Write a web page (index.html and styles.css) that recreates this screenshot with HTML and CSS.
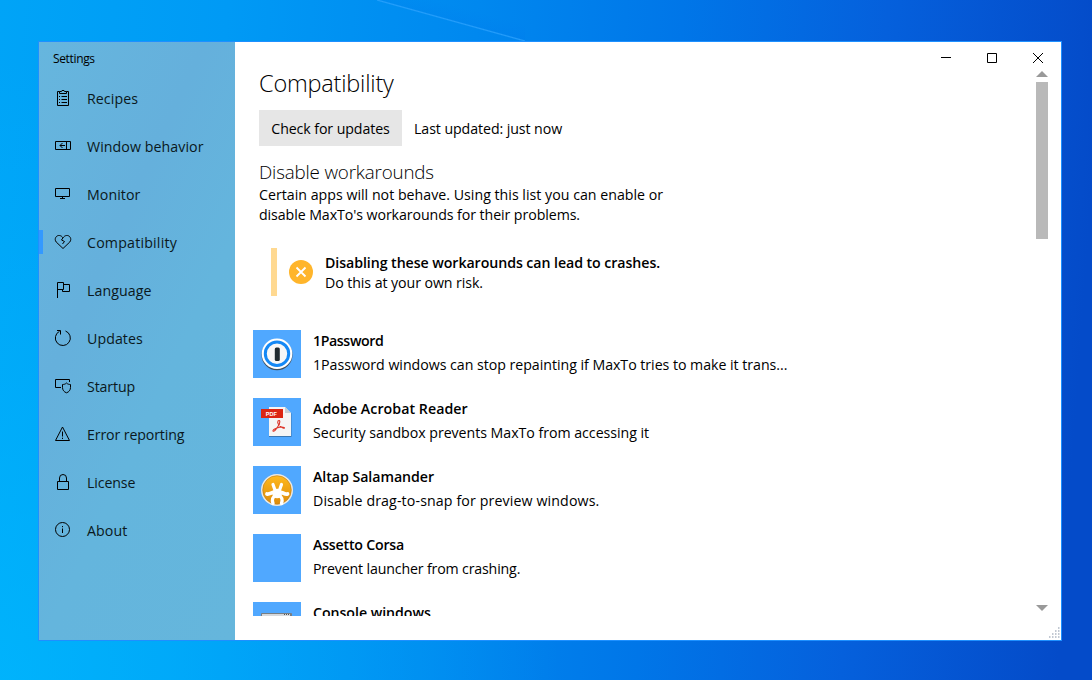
FILE: index.html
```html
<!DOCTYPE html>
<html lang="en">
<head>
<meta charset="utf-8">
<title>Settings</title>
<link rel="stylesheet" href="styles.css">
</head>
<body>
<main class="window">
  <aside class="sidebar">
    <div class="app-title">Settings</div>
    <nav class="nav">
      <a class="nav-item"><svg class="icon" viewBox="0 0 18 18"><path d="M5.500 2.500H3.500V16.500H14.500V2.500H12.500M5.500 4.500V2.500H7.500L8 1.500H10L10.500 2.500H12.500V4.500ZM5 7.500H6M7.500 7.500H13M5 10.500H6M7.500 10.500H13M5 13.500H6M7.500 13.500H13"/></svg><span>Recipes</span></a>
      <a class="nav-item"><svg class="icon" viewBox="0 0 18 18"><path d="M1.500 4.500H16.500V12.500H1.500ZM12.500 4.500V12.500M11 8.500H6M8.500 6L6 8.500L8.500 11"/></svg><span>Window behavior</span></a>
      <a class="nav-item"><svg class="icon" viewBox="0 0 18 18"><path d="M1.500 3.500H15.500V11.500H1.500ZM8.500 11.500V14M6 13.500H11"/></svg><span>Monitor</span></a>
      <a class="nav-item selected"><svg class="icon" viewBox="0 0 18 18"><path d="M9 15.500L2.200 9C-.3 5.800 2.500 2 5.500 2.500C7.200 2.700 8 3.600 9 4.800C10 3.600 10.800 2.700 12.500 2.500C15.500 2 18.300 5.800 15.800 9ZM9 4.800L7.500 7L10.500 8.500L8.500 11"/></svg><span>Compatibility</span></a>
      <a class="nav-item"><svg class="icon" viewBox="0 0 18 18"><path d="M3.500 17V1.500H9.500V8.500H3.500M9.500 3.500H15.500V10.500H8.500V8.500"/></svg><span>Language</span></a>
      <a class="nav-item"><svg class="icon" viewBox="0 0 18 18"><path d="M11.500 2A7.500 7.500 0 1 1 5.500 2.300M3 1.500H6.500V5.500"/></svg><span>Updates</span></a>
      <a class="nav-item narrow"><svg class="icon" viewBox="0 0 18 18"><path d="M7 10.500H1.500V2.500H15.500V5M12.500 6C11.300 7.200 10 7.500 8.500 7.500V10.500C8.500 13 10 15 12.500 15.800C15 15 16.500 13 16.500 10.500V7.500C15 7.500 13.700 7.200 12.500 6Z"/></svg><span>Startup</span></a>
      <a class="nav-item narrow"><svg class="icon" viewBox="0 0 18 18"><path d="M8.500 2L15.500 15.500H1.500ZM8.500 6.500V11.500M8.500 12.700V14"/></svg><span>Error reporting</span></a>
      <a class="nav-item narrow"><svg class="icon" viewBox="0 0 18 18"><path d="M3.500 8.500H14.500V16.500H3.500ZM5.500 8.500V5A3.500 3.500 0 0 1 12.500 5V8.500"/></svg><span>License</span></a>
      <a class="nav-item"><svg class="icon" viewBox="0 0 18 18"><circle cx="8.500" cy="8.500" r="7"/><path d="M8.500 7.500V12M8.500 5V6.200"/></svg><span>About</span></a>
    </nav>
  </aside>
  <section class="content">
    <div class="controls">
      <svg viewBox="0 0 10 10"><path d="M0 4.500H10"/></svg>
      <svg viewBox="0 0 10 10"><path d="M.5.500H9.500V9.500H.5Z"/></svg>
      <svg viewBox="0 0 10 10"><path d="M0 0L10 10M10 0L0 10"/></svg>
    </div>
    <div class="body">
      <div class="page">
        <h1>Compatibility</h1>
        <div class="update-row"><button class="button">Check for updates</button><span class="updated">Last updated: just now</span></div>
        <h2>Disable workarounds</h2>
        <p class="intro">Certain apps will not behave. Using this list you can enable or<br><span>disable MaxTo's workarounds for their problems.</span></p>
        <div class="warning">
          <svg class="warn-icon" viewBox="0 0 24 24"><circle cx="12" cy="12" r="12" fill="#ffb52b"/><path d="M7.500 7.500L16.500 16.500M16.500 7.500L7.500 16.500" stroke="#fff" stroke-width="1.800"/></svg>
          <div class="warn-copy"><div class="warn-title">Disabling these workarounds can lead to crashes.</div><div class="warn-text">Do this at your own risk.</div></div>
        </div>
        <div class="apps">
          <article class="app onepassword">
            <svg class="tile" viewBox="0 0 48 48"><circle cx="24" cy="24.800" r="15.500" fill="#3f4e5c"/><circle cx="24" cy="23.700" r="15.300" fill="#fff"/><circle cx="24" cy="23.700" r="11.700" fill="#f7f7f7" stroke="#1488f5" stroke-width="3"/><rect x="21.800" y="17.500" width="5" height="13.500" rx="1.500" fill="#202a30"/></svg>
            <div><h3>1Password</h3><p>1Password windows can stop repainting if MaxTo tries to make it trans...</p></div>
          </article>
          <article class="app acrobat">
            <svg class="tile" viewBox="0 0 48 48"><path d="M16 9.500H32L38.500 15.500V39H16Z" fill="#3976b1"/><path d="M16 9H32L38 15V38H16Z" fill="#f5f5f5"/><path d="M32 9V15H38Z" fill="#c8ced3"/><rect x="8" y="11" width="22" height="9" fill="#dc2512"/><text class="pdf" x="12.800" y="17.800">PDF</text><path d="M25 23C27 21 28 25 24.500 29C23 31.500 21 34 20 33C19 31 28 28 31 29.500C33 31 28 30 25.500 26.500C24.500 25 24.500 24 25 23Z" fill="none" stroke="#dc3429" stroke-width="1.100"/></svg>
            <div><h3>Adobe Acrobat Reader</h3><p>Security sandbox prevents MaxTo from accessing it</p></div>
          </article>
          <article class="app altap">
            <svg class="tile" viewBox="0 0 48 48"><defs><linearGradient id="amber" x2="0" y2="1"><stop stop-color="#ffb91e"/><stop offset="1" stop-color="#dd8b0b"/></linearGradient></defs><circle cx="24" cy="24" r="16" fill="#eee9df"/><circle cx="24" cy="24" r="14.300" fill="url(#amber)" stroke="#bb7a1a" stroke-width=".6"/><g fill="none" stroke="#fff" stroke-linecap="round"><path d="M23 27L20 18.500M25.500 27L28.500 18.500" stroke-width="3.200"/><path d="M24 26.500C20 24.500 17 29 14 28M24 26.500C28 24.500 31 29 34.500 28" stroke-width="3.800"/><path d="M23 29C19.500 31 18.500 33 20 37.500M25.500 29C29 31 30 33 28.500 37.500" stroke-width="3.400"/></g><circle cx="24.200" cy="27.500" r="4.800" fill="#fff"/></svg>
            <div><h3>Altap Salamander</h3><p>Disable drag-to-snap for preview windows.</p></div>
          </article>
          <article class="app assetto"><div class="tile"></div><div><h3>Assetto Corsa</h3><p>Prevent launcher from crashing.</p></div></article>
          <article class="app"><svg class="tile" viewBox="0 0 48 48"><rect x="8" y="11" width="31" height="25" rx="1" fill="#777e84"/><rect x="9" y="12" width="28" height="23" fill="#d5d8dc"/><path d="M31 12.500H37" stroke="#555" stroke-dasharray="1 1"/></svg><div><h3>Console windows</h3></div></article>
        </div>
      </div>
      <div class="scrollbar"><i class="arrow up"></i><i class="thumb"></i><i class="arrow down"></i></div>
    </div>
    <svg class="grip" viewBox="0 0 12 12"><path d="M10 1H12M7 4H12M4 7H12M1 10H12" stroke="#aeb7c3" stroke-width="1.500" stroke-dasharray="1.500 1.500"/></svg>
  </section>
</main>
</body>
</html>
```
FILE: styles.css
```css
* { box-sizing: border-box; }
body {
  margin: 0; width: 1092px; height: 680px; overflow: hidden;
  padding: 41px 30px 39px 38px;
  font-family: "Open Sans", "Noto Sans", sans-serif;
  font-size: 14.2px; color: #000;
  background:
    linear-gradient(to top right, transparent 48.500%, rgba(50,165,255,.75) 50%, rgba(0,110,235,.12) 51.500%, transparent 70%) 377px 0 / 148px 41px no-repeat,
    radial-gradient(ellipse 560px 620px at 0 100%, rgba(0,190,255,.6), rgba(0,190,255,0)),
    linear-gradient(94deg, #00a4f7 0, #009af5 20%, #0088ef 42%, #0076e8 60%, #0560dc 78%, #044bc9 97%);
}
h1, h2, h3, p { margin: 0; font-weight: 400; white-space: nowrap; }
.window { display: flex; width: 1024px; height: 600px; border: 1px solid #1e90ff; background: #fff; }
.sidebar { width: 196px; background: linear-gradient(115deg, #66b6de 0, #65b0dc 35%, #64b5dd 60%, #65b6dc 100%); }
.app-title { height: 32px; padding: 8px 0 0 14px; font-size: 12px; line-height: 18px; letter-spacing: -.35px; }
.nav-item { display: flex; align-items: center; height: 48px; padding-left: 15px; gap: 15px; line-height: 20px; color: #0a1820; letter-spacing: .07px; }
.nav-item span { padding-top: 1px; }
.nav-item.narrow { letter-spacing: -.13px; }
.nav-item.selected { letter-spacing: .2px; background: linear-gradient(#3399ff, #3399ff) 0 12px / 4px 24px no-repeat; }
.icon { width: 18px; height: 18px; fill: none; stroke: #000; stroke-width: 1; }
.content { display: flex; flex-direction: column; flex: 1; position: relative; }
.controls { display: flex; justify-content: flex-end; height: 26px; gap: 36px; padding: 11px 18px 0 0; }
.controls svg { width: 10px; height: 10px; fill: none; stroke: #000; stroke-width: 1; flex: none; }
.body { display: flex; height: 548px; }
.page { flex: 1; height: 548px; overflow: hidden; padding-left: 24px; }
h1 { font-size: 23.500px; font-weight: 340; line-height: 30px; letter-spacing: -.2px; }
.update-row { display: flex; align-items: center; height: 36px; margin-top: 12px; gap: 12px; }
.button { width: 143px; height: 36px; border: 0; padding: 1px 0 0; background: #e6e6e6; font: inherit; letter-spacing: -.1px; }
.updated { padding-top: 1px; letter-spacing: -.08px; }
h2 { font-size: 18.800px; font-weight: 340; line-height: 26px; margin-top: 13px; letter-spacing: -.17px; }
.intro { line-height: 20px; letter-spacing: .01px; }
.intro span { letter-spacing: -.08px; }
.warning { display: flex; align-items: center; height: 48px; margin: 23px 0 0 12px; border-left: 6px solid #ffd991; padding-left: 12px; gap: 12px; line-height: 20px; white-space: nowrap; }
.warn-icon { width: 24px; height: 24px; }
.warn-copy { padding-top: 2px; }
.warn-title { font-weight: 600; letter-spacing: -.07px; }
.warn-text { letter-spacing: -.08px; }
.apps { display: grid; gap: 20px; margin: 34px 0 0 -6px; }
.app { display: flex; gap: 12px; height: 48px; }
.tile { width: 48px; height: 48px; background: #50a8ff; flex: none; }
.app h3 { font-size: inherit; font-weight: 600; line-height: 22px; letter-spacing: -.05px; }
.app p { line-height: 26px; letter-spacing: -.035px; }
.onepassword h3 { letter-spacing: -.4px; }
.acrobat h3 { letter-spacing: .05px; }
.altap p { letter-spacing: .12px; }
.assetto h3 { letter-spacing: -.22px; }
.assetto p { letter-spacing: -.16px; }
.pdf { font: bold 5.500px "Liberation Sans", sans-serif; fill: #fff; }
.scrollbar { display: flex; flex-direction: column; width: 12px; margin-right: 13px; padding: 3px 0 5px; }
.arrow { border: 6px solid transparent; border-top: 0; border-bottom: 6px solid #999; width: 12px; height: 6px; }
.thumb { height: 157px; background: #b9b9b9; margin-top: 5px; }
.down { border-top: 6px solid #999; border-bottom: 0; margin-top: auto; }
.grip { position: absolute; right: 1px; bottom: 1px; width: 12px; height: 12px; }
```
